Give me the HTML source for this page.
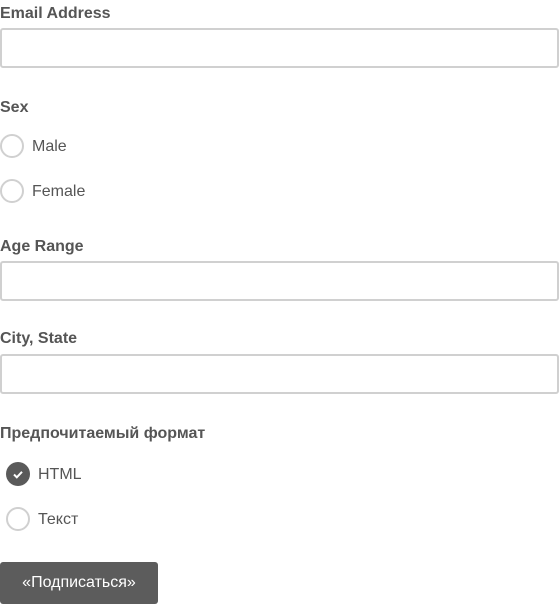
<!DOCTYPE html>
<html><head><meta charset="utf-8"><style>
body{margin:0;background:#fff;font-family:"Liberation Sans",sans-serif;color:#555;}
.a{position:absolute;}
.lbl{font-weight:bold;font-size:16px;line-height:18px;}
.in{left:0;width:555px;height:36px;border:2px solid #d0d0d0;border-radius:3px;box-sizing:content-box;}
.r{width:20px;height:20px;border:2px solid #d0d0d0;border-radius:50%;}
.t{font-size:16px;line-height:20px;color:#555;}
</style></head><body>
<div class="a lbl" style="left:0;top:5px">Email Address</div>
<div class="a in" style="top:28px"></div>
<div class="a lbl" style="left:0;top:99px">Sex</div>
<div class="a r" style="left:0;top:134px"></div><div class="a t" style="left:32px;top:137px">Male</div>
<div class="a r" style="left:0;top:179px"></div><div class="a t" style="left:32px;top:182px">Female</div>
<div class="a lbl" style="left:0;top:238px">Age Range</div>
<div class="a in" style="top:261px"></div>
<div class="a lbl" style="left:0;top:330px">City, State</div>
<div class="a in" style="top:354px"></div>
<div class="a lbl" style="left:0;top:425px">Предпочитаемый формат</div>
<div class="a" style="left:6px;top:462px;width:24px;height:24px;border-radius:50%;background:#5a5a5a">
<svg width="24" height="24" viewBox="0 0 24 24"><path d="M8 12.5l2.8 2.8L16 9.8" fill="none" stroke="#fff" stroke-width="2"/></svg></div>
<div class="a t" style="left:38px;top:465px">HTML</div>
<div class="a r" style="left:6px;top:507px"></div><div class="a t" style="left:38px;top:510px">Текст</div>
<div class="a" style="left:0;top:562px;width:158px;height:42px;background:#5c5c5c;border-radius:3px;color:#fff;font-size:16px;line-height:42px;text-align:center">«Подписаться»</div>
</body></html>
